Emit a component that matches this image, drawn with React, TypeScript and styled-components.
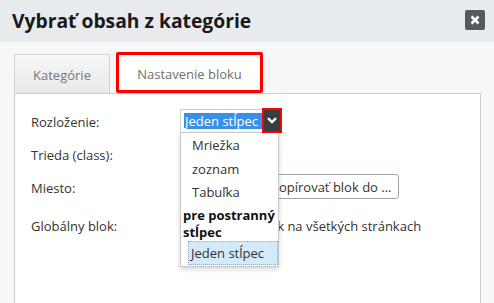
import React from "react";
import styled, { createGlobalStyle } from "styled-components";

const Global = createGlobalStyle`
  html, body { margin: 0; padding: 0; }
  body {
    background: #f7f7f7;
    font-family: "Open Sans", "Noto Sans", sans-serif;
    color: #333;
    width: 494px;
    height: 303px;
    overflow: hidden;
  }
`;

const Dialog = styled.div`
  width: 494px;
  height: 303px;
  display: flex;
  flex-direction: column;
  background: #f7f7f7;
`;

const Header = styled.div`
  height: 42px;
  flex: none;
  background: #e8ebee;
  display: flex;
  align-items: center;
  justify-content: space-between;
  padding: 0 9px 0 12px;
  box-sizing: border-box;
`;

const Title = styled.h1`
  margin: 0 0 1px 0;
  font-size: 19.3px;
  font-weight: 700;
  color: #1a1a1a;
  letter-spacing: 0;
`;

const Close = styled.button`
  width: 20px;
  height: 20px;
  border: 0;
  padding: 0;
  border-radius: 2px;
  background: #555a5f;
  display: flex;
  align-items: center;
  justify-content: center;
  margin-bottom: 3px;
`;

const Body = styled.div`
  flex: 1;
  display: flex;
  flex-direction: column;
  padding: 10px 13px 0 14px;
`;

const Tabs = styled.div`
  display: flex;
  align-items: flex-end;
  gap: 5px;
  height: 41px;
`;

const Tab = styled.div<{ $active?: boolean }>`
  box-sizing: border-box;
  display: flex;
  align-items: center;
  justify-content: center;
  font-size: 13px;
  color: #777;
  ${(p) =>
    p.$active
      ? `
    width: 147px;
    height: 41px;
    margin-left: 1px;
    background: #fff;
    border: 3px solid #f00;
    border-radius: 2px;
    padding-top: 2px;
    color: #707070;
  `
      : `
    width: 96px;
    height: 39px;
    background: linear-gradient(#f6f7f8, #e7e9eb);
    border: 1px solid #cfd2d5;
    border-bottom: 0;
    padding-top: 1px;
  `}
`;

const Panel = styled.div`
  position: relative;
  flex: 1;
  background: #fff;
  border: 1px solid #ccc;
  border-bottom: 0;
  padding: 14px 0 0 16px;
  display: flex;
  flex-direction: column;
  gap: 8px;
`;

const Row = styled.div<{ $shift?: number }>`
  display: flex;
  align-items: center;
  height: 25px;
  margin-top: ${(p) => p.$shift || 0}px;
`;

const Label = styled.div`
  width: 149px;
  flex: none;
  font-size: 13px;
  color: #333;
  padding-top: 2px;
`;

const Select = styled.div`
  position: relative;
  display: flex;
  align-items: stretch;
  height: 25px;
`;

const SelectBox = styled.div`
  box-sizing: border-box;
  width: 82px;
  height: 24px;
  margin-top: 1px;
  border: 1px solid #ccc;
  border-right: 0;
  padding: 3px 0 3px 3px;
  display: flex;
`;

const Highlight = styled.span`
  flex: 1;
  background: #3990ea;
  color: #fff;
  font-size: 13px;
  line-height: 17px;
  padding-left: 1px;
  white-space: nowrap;
  overflow: hidden;
`;

const Arrow = styled.div`
  box-sizing: border-box;
  width: 20px;
  height: 25px;
  background: #3a3d40;
  border: 2px solid #f00;
  display: flex;
  align-items: center;
  justify-content: center;
`;

const List = styled.div`
  position: absolute;
  top: 25px;
  left: 0;
  width: 99px;
  box-sizing: border-box;
  background: #fff;
  border: 1px solid #c9c9c9;
  border-top: 0;
  box-shadow: 0 2px 5px rgba(0, 0, 0, 0.18);
  padding: 1px 0 1px 0;
  z-index: 5;
`;

const Option = styled.div<{ $selected?: boolean }>`
  font-size: 13px;
  line-height: 23.5px;
  color: #333;
  padding-left: 11px;
  ${(p) =>
    p.$selected &&
    `
    margin-left: 7px;
    padding-left: 3px;
    background: #d5eaf9;
    outline: 1px dotted #8fa8c8;
    outline-offset: -1px;
    line-height: 24px;
  `}
`;

const GroupLabel = styled.div`
  font-size: 13px;
  font-weight: 700;
  color: #111;
  line-height: 17px;
  padding: 2px 0 0 2px;
`;

const CopyButton = styled.button`
  box-sizing: border-box;
  height: 25px;
  margin-left: 82px;
  padding: 0 6px 0 8px;
  border: 1px solid #a0a6b0;
  border-radius: 3px;
  background: #fff;
  font-family: inherit;
  font-size: 13px;
  color: #333;
`;

const Check = styled.label`
  display: flex;
  align-items: center;
  gap: 12px;
  font-size: 13px;
  color: #333;
  padding-top: 2px;
`;

export default function App() {
  return (
    <Dialog>
      <Global />
      <Header>
        <Title>Vybrať obsah z kategórie</Title>
        <Close aria-label="close">
          <svg width="10" height="10" viewBox="0 0 10 10">
            <path d="M1.5 1.5 L8.5 8.5 M8.5 1.5 L1.5 8.5" stroke="#fff" strokeWidth="2.6" />
          </svg>
        </Close>
      </Header>
      <Body>
        <Tabs>
          <Tab>Kategórie</Tab>
          <Tab $active>Nastavenie bloku</Tab>
        </Tabs>
        <Panel>
          <Row>
            <Label>Rozloženie:</Label>
            <Select>
              <SelectBox>
                <Highlight>Jeden stĺpec</Highlight>
              </SelectBox>
              <Arrow>
                <svg width="10" height="7" viewBox="0 0 10 7">
                  <path d="M1 1.2 L5 5 L9 1.2" fill="none" stroke="#fff" strokeWidth="2.4" />
                </svg>
              </Arrow>
              <List>
                <Option>Mriežka</Option>
                <Option>zoznam</Option>
                <Option>Tabuľka</Option>
                <GroupLabel>pre postranný stĺpec</GroupLabel>
                <Option $selected>Jeden stĺpec</Option>
              </List>
            </Select>
          </Row>
          <Row>
            <Label>Trieda (class):</Label>
          </Row>
          <Row>
            <Label>Miesto:</Label>
            <CopyButton>Kopírovať blok do ...</CopyButton>
          </Row>
          <Row $shift={5}>
            <Label>Globálny blok:</Label>
            <Check>
              <input type="checkbox" style={{ margin: 0 }} />
              Zobraziť blok na všetkých stránkach
            </Check>
          </Row>
        </Panel>
      </Body>
    </Dialog>
  );
}
